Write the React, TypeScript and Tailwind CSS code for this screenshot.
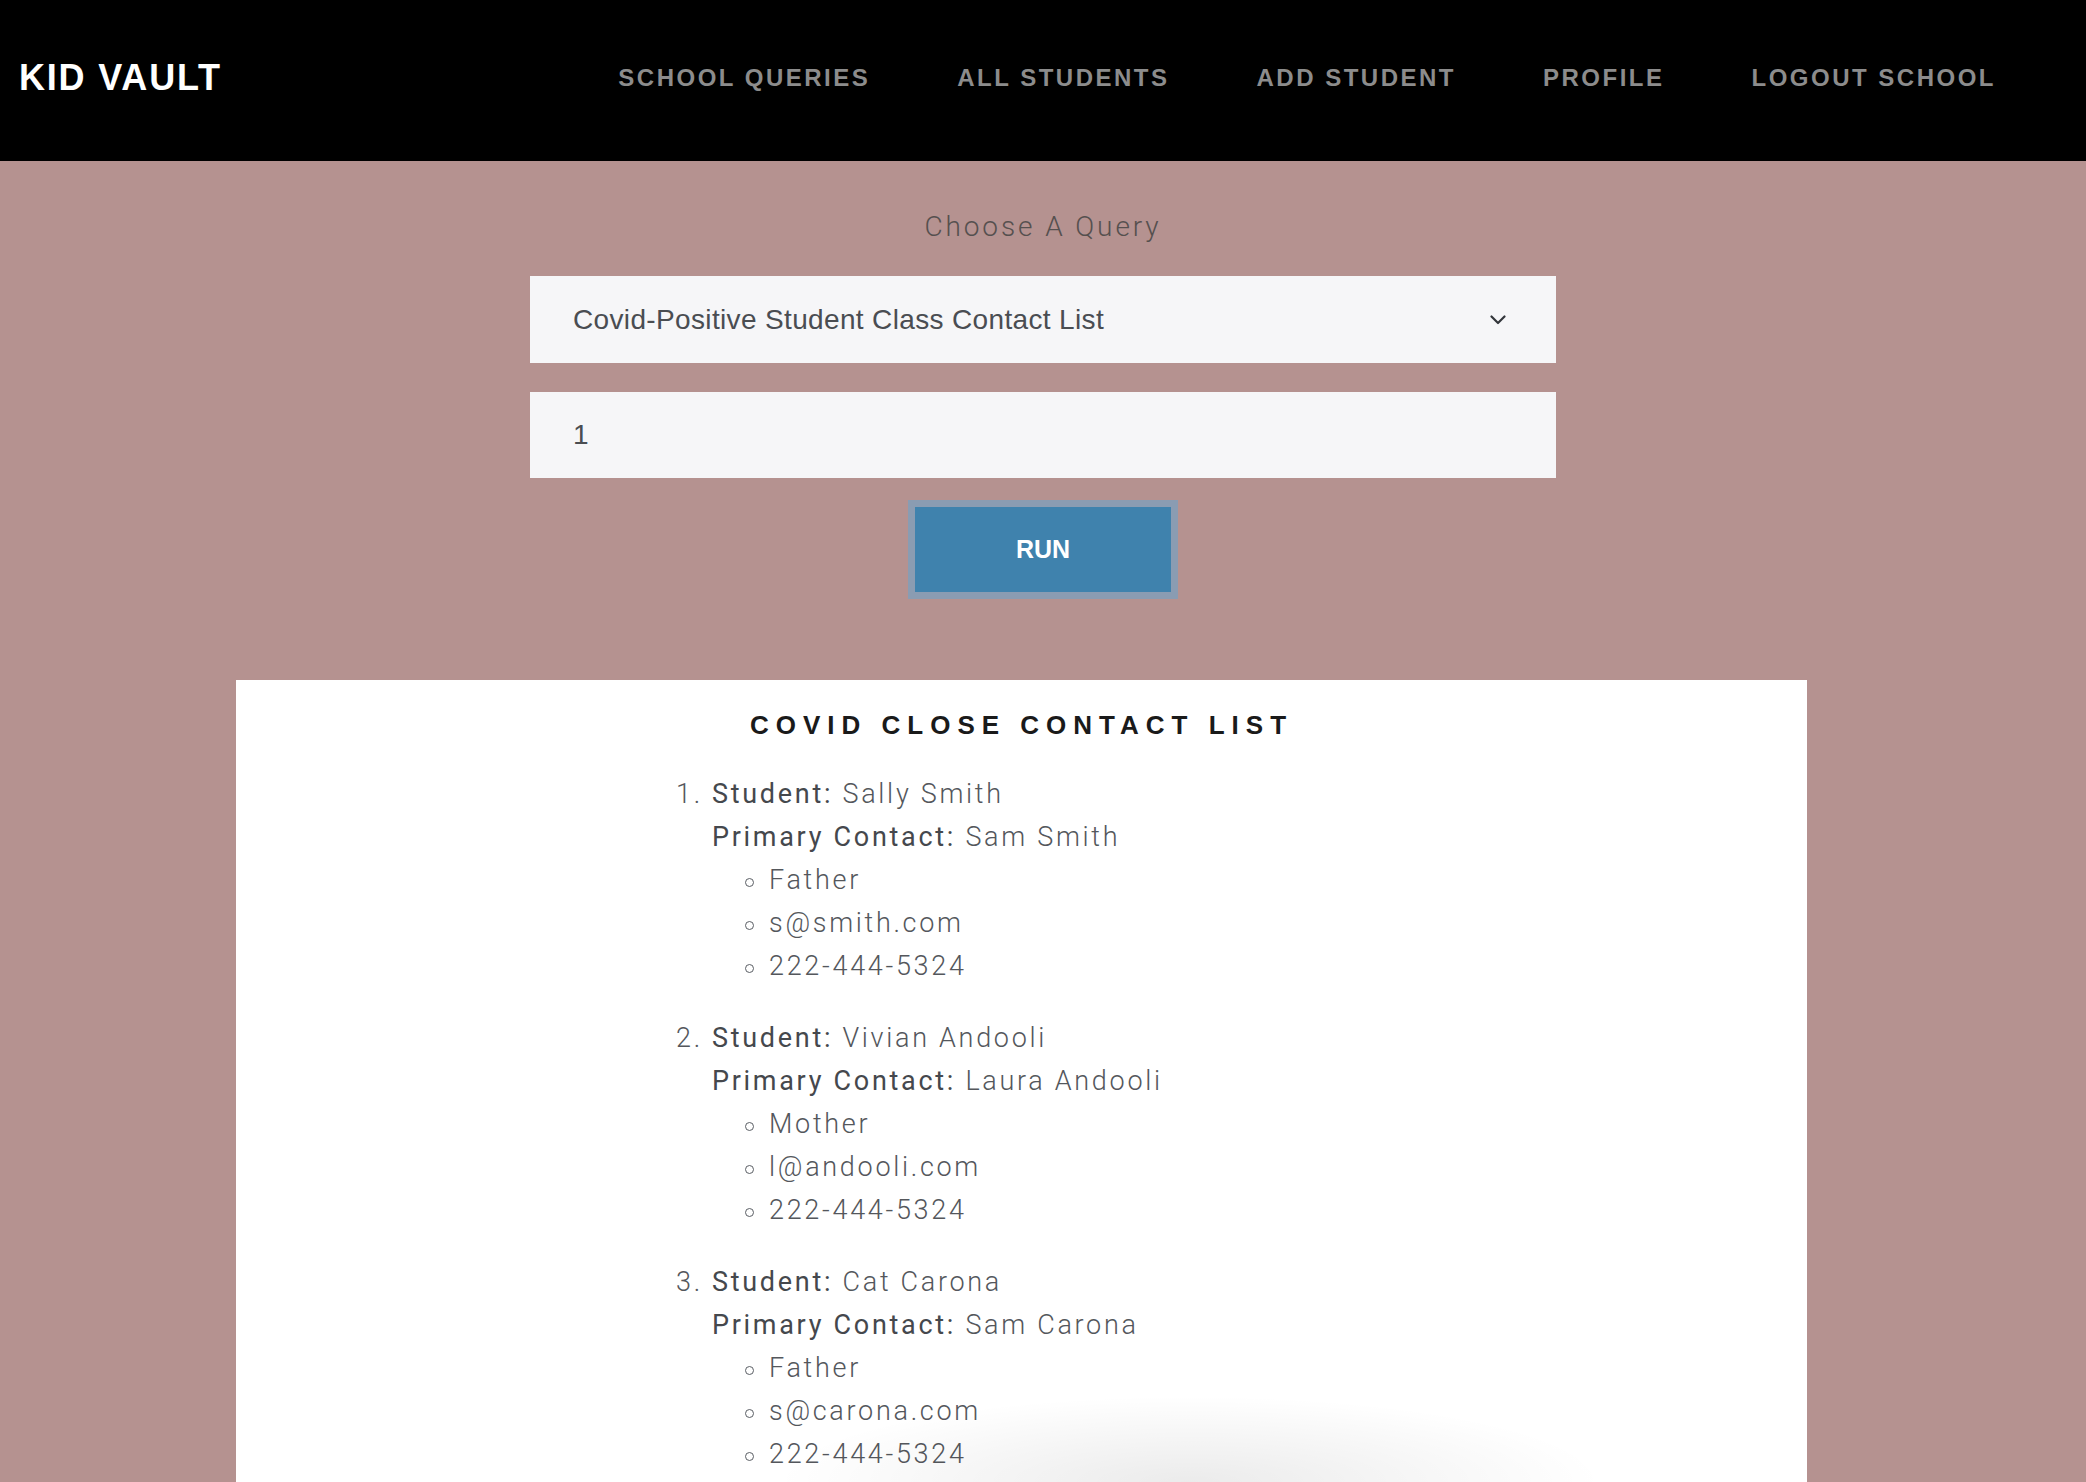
import React from "react";

type Student = {
  name: string;
  contact: string;
  relation: string;
  email: string;
  phone: string;
};

const students: Student[] = [
  { name: "Sally Smith", contact: "Sam Smith", relation: "Father", email: "s@smith.com", phone: "222-444-5324" },
  { name: "Vivian Andooli", contact: "Laura Andooli", relation: "Mother", email: "l@andooli.com", phone: "222-444-5324" },
  { name: "Cat Carona", contact: "Sam Carona", relation: "Father", email: "s@carona.com", phone: "222-444-5324" },
];

const navItems = ["SCHOOL QUERIES", "ALL STUDENTS", "ADD STUDENT", "PROFILE", "LOGOUT SCHOOL"];

function SubItem({ children }: { children: React.ReactNode }) {
  return (
    <div className="flex items-center pl-[33px]">
      <span className="mt-[4px] h-[9px] w-[9px] rounded-full border border-[#5a5e64]" />
      <span className="ml-[15px]">{children}</span>
    </div>
  );
}

export default function App() {
  return (
    <div className="relative h-[1482px] overflow-hidden bg-[#b59290] font-['Liberation_Sans',Arial,sans-serif]">
      <header className="flex h-[161px] items-center bg-black pb-[5px]">
        <div className="pl-[19px] text-[36px] font-bold tracking-[1.8px] text-white">KID VAULT</div>
        <nav className="ml-auto flex gap-[87px] pr-[90px]">
          {navItems.map((n) => (
            <span key={n} className="text-[24px] font-bold tracking-[2.5px] text-[#8c8c8c]">
              {n}
            </span>
          ))}
        </nav>
      </header>

      <main className="flex flex-col items-center">
        <div className="mt-[50px] font-['Roboto',sans-serif] text-[28px] font-light leading-[32px] tracking-[2.9px] text-[#55504f]">
          Choose A Query
        </div>
        <div className="mt-[33px] flex h-[87px] w-[1026px] items-center justify-between bg-[#f6f6f8] pl-[43px] pr-[50px] text-[28px] tracking-[0.35px] text-[#4a4d52]">
          <span>Covid-Positive Student Class Contact List</span>
          <svg width="16" height="10" viewBox="0 0 16 10" fill="none">
            <path d="M1.5 1.5 L8 8 L14.5 1.5" stroke="#33363b" strokeWidth="2.2" strokeLinecap="round" strokeLinejoin="round" />
          </svg>
        </div>
        <div className="mt-[29px] flex h-[86px] w-[1026px] items-center bg-[#f6f6f8] pl-[43px] text-[28px] text-[#4a4d52]">
          1
        </div>
        <button className="mt-[22px] flex h-[99px] w-[270px] items-center justify-center border-[7px] border-[#8a9cb2] bg-[#3f82ad] text-[25px] font-bold text-white">
          RUN
        </button>

        <section className="mt-[81px] ml-[236px] w-[1571px] self-start bg-white pb-[200px]">
          <h2 className="pt-[30px] text-center text-[26px] font-bold leading-[30px] tracking-[7px] text-[#1a1a1a]">
            COVID CLOSE CONTACT LIST
          </h2>
          <div className="mt-[33px] pl-[440px] font-['Roboto',sans-serif] text-[27px] leading-[43px] tracking-[2.7px] text-[#54575c]">
            {students.map((s, i) => (
              <div key={s.name} className="mb-[29px] grid grid-cols-[36px_1fr]">
                <span className="font-light">{i + 1}.</span>
                <div className="font-light">
                  <div>
                    <span className="font-normal text-[#45484d]">Student:</span> {s.name}
                  </div>
                  <div>
                    <span className="font-normal text-[#45484d]">Primary Contact:</span> {s.contact}
                  </div>
                  <SubItem>{s.relation}</SubItem>
                  <SubItem>{s.email}</SubItem>
                  <SubItem>{s.phone}</SubItem>
                </div>
              </div>
            ))}
          </div>
        </section>
      </main>

      <div className="pointer-events-none absolute bottom-[-90px] left-[760px] h-[180px] w-[860px] bg-[radial-gradient(ellipse_at_center,rgba(0,0,0,0.08),rgba(0,0,0,0)_68%)]" />
    </div>
  );
}
